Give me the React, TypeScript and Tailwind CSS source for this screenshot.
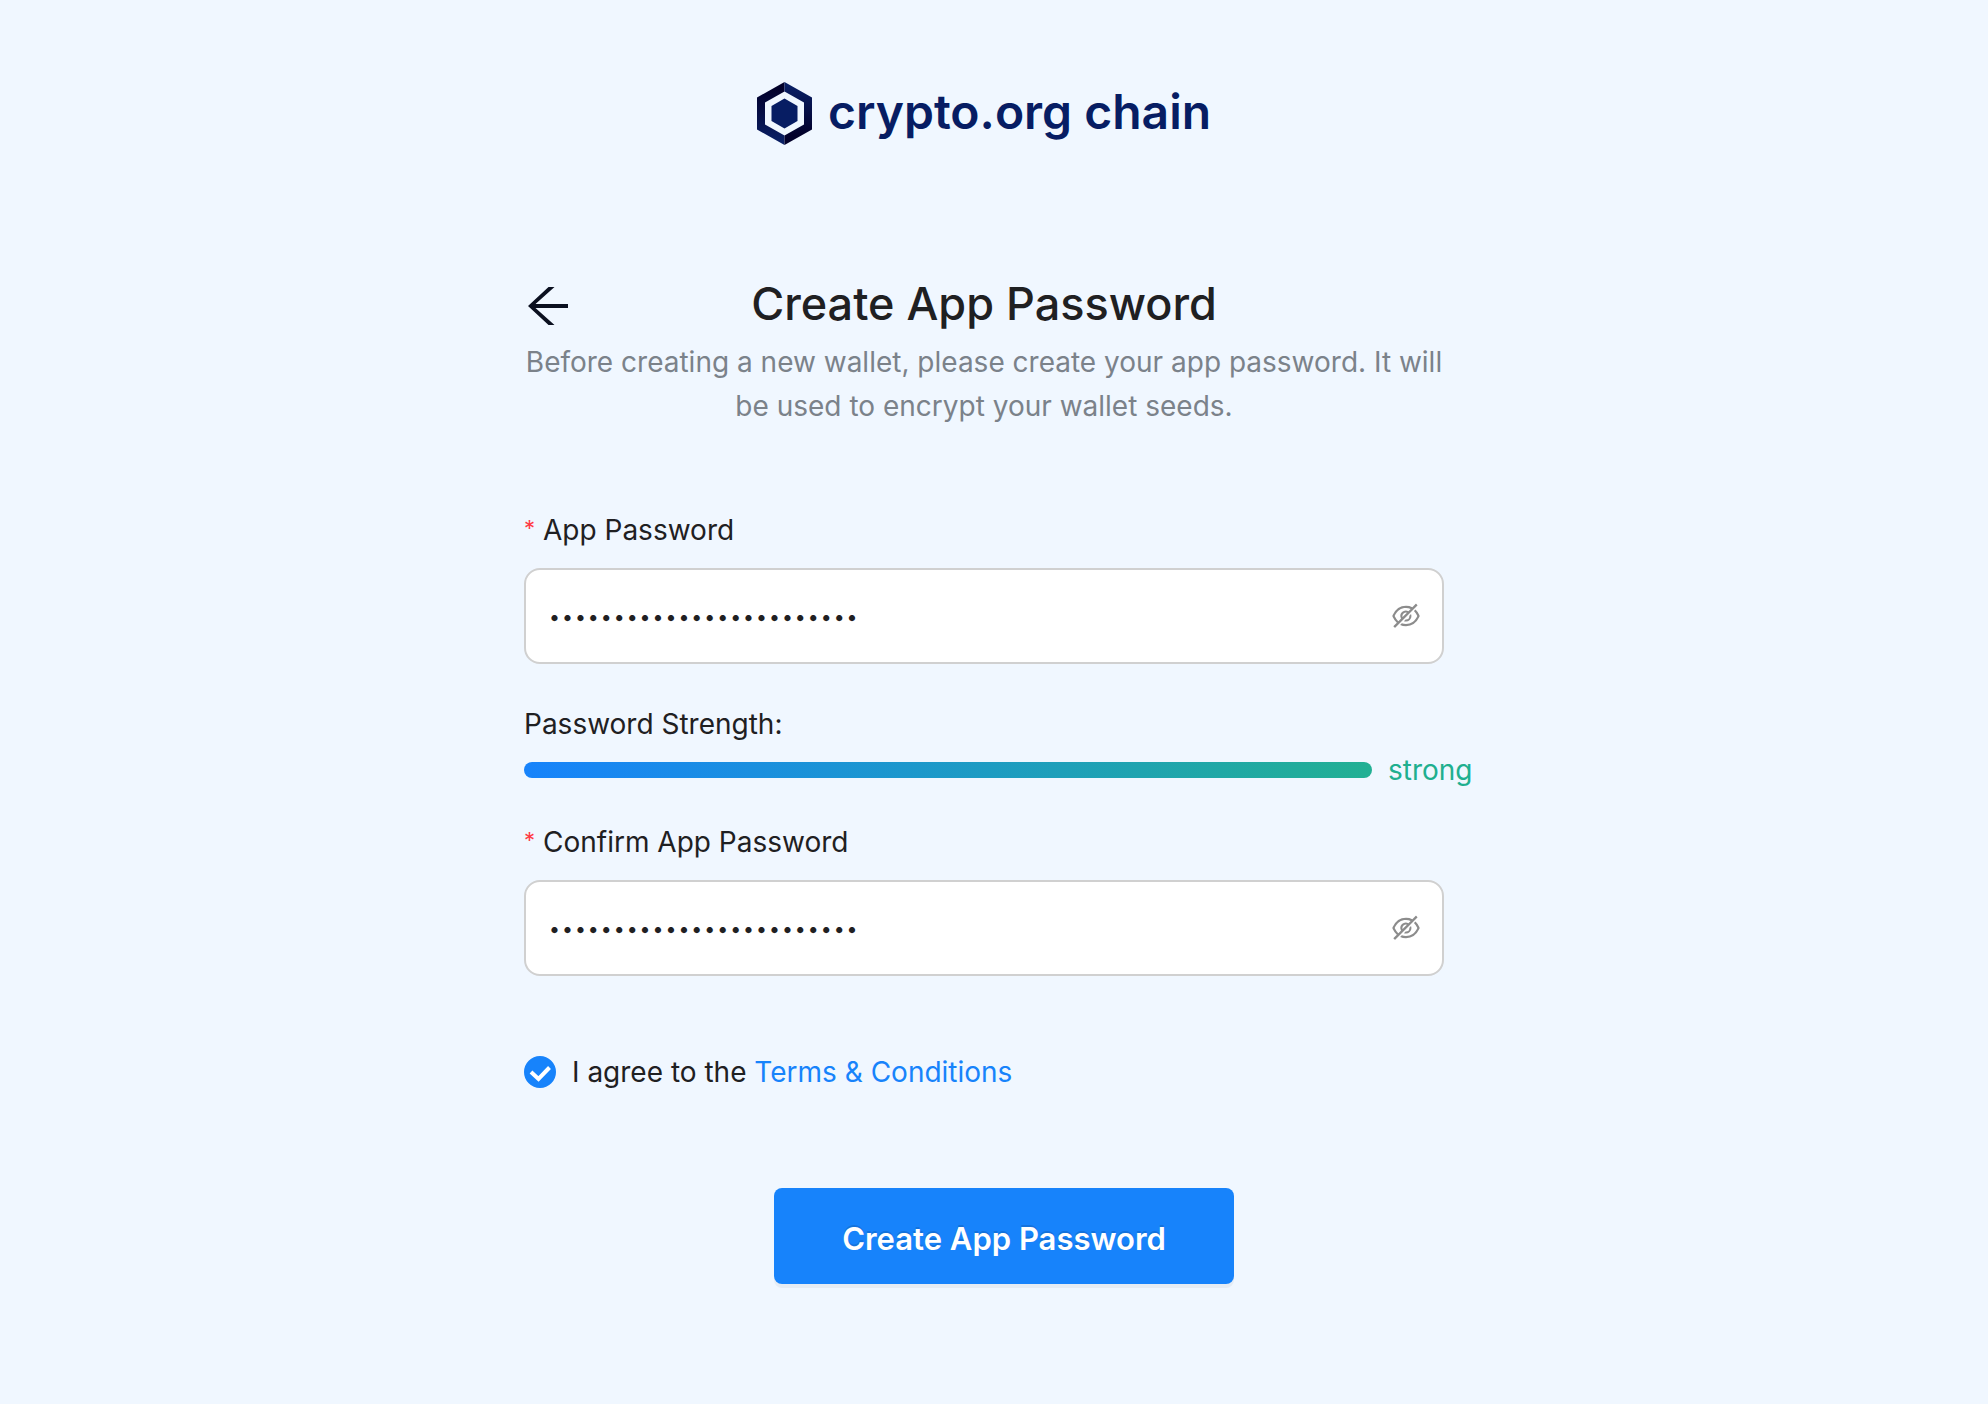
import { useState } from "react";
import { AiOutlineEye, AiOutlineEyeInvisible } from "react-icons/ai";

function Logo() {
  return (
    <div className="flex items-center justify-center gap-4 text-[#071d63]">
      <svg viewBox="0 0 55 63" className="h-[63px] w-[55px]" aria-hidden="true">
        <defs>
          <linearGradient id="hexLeft" x1="0" y1="0" x2="0" y2="1">
            <stop offset="0.1" stopColor="#02002a" />
            <stop offset="1" stopColor="#0a2168" />
          </linearGradient>
          <linearGradient id="hexRight" x1="0" y1="0" x2="0" y2="1">
            <stop offset="0" stopColor="#0a2168" />
            <stop offset="0.85" stopColor="#02002a" />
          </linearGradient>
        </defs>
        <path d="M27.5 0 0 15.5v32L27.5 63V53.5L8 42.5V20.5l19.5-11z" fill="url(#hexLeft)" />
        <path d="M27.5 0 55 15.5v32L27.5 63V53.5L47 42.5V20.5L27.5 9.5z" fill="url(#hexRight)" />
        <path d="m27.5 16.5 13 7.5v15l-13 7.5L14.5 39V24z" fill="#071d63" />
      </svg>
      <span className="pb-1 text-[48px] leading-14 font-semibold">crypto.org chain</span>
    </div>
  );
}

type PasswordFieldProps = {
  id: string;
  label: string;
  value: string;
  onChange: (value: string) => void;
};

function PasswordField({ id, label, value, onChange }: PasswordFieldProps) {
  const [visible, setVisible] = useState(false);
  const Icon = visible ? AiOutlineEye : AiOutlineEyeInvisible;
  return (
    <div className="flex flex-col gap-4">
      <label htmlFor={id} className="flex gap-2 leading-11">
        <span className="text-[22px] leading-10 text-[#ff3b45]">*</span>
        {label}
      </label>
      <div className="flex h-24 items-center rounded-2xl border-2 border-[#d0d0d0] bg-white px-5">
        <input
          id={id}
          type={visible ? "text" : "password"}
          value={value}
          onChange={(e) => onChange(e.target.value)}
          className="h-full min-w-0 flex-1 bg-transparent pt-[2px] pl-[2px] text-[23px] font-light outline-none"
        />
        <button
          type="button"
          aria-label={visible ? "Hide password" : "Show password"}
          onClick={() => setVisible(!visible)}
          className="text-[#8c8c8c]"
        >
          <Icon className="size-8" />
        </button>
      </div>
    </div>
  );
}

export default function App() {
  const [password, setPassword] = useState("correct-horse-battery-24");
  const [confirm, setConfirm] = useState("correct-horse-battery-24");
  const [agreed, setAgreed] = useState(true);

  return (
    <div className="flex min-h-screen flex-col items-center bg-[#f0f7ff] pt-[82px] pr-5 pb-[119px] font-['Inter',sans-serif] text-[28px] text-[#1f2022]">
      <Logo />
      <main className="mt-[131px] w-full max-w-[920px]">
        <div className="grid grid-cols-[1fr_auto_1fr] items-center">
          <button type="button" aria-label="Back" className="mt-1 ml-1 w-10">
            <svg viewBox="0 0 40 38" className="h-[38px] w-10" fill="#0b1020" aria-hidden="true">
              <path d="M20.5 0h6L7.5 17H40v4H7.5l19 17h-6L0 19z" />
            </svg>
          </button>
          <h1 className="text-[45px] leading-14 font-medium">Create App Password</h1>
        </div>
        <p className="mt-2 text-center leading-11 text-[#7b828a]">
          Before creating a new wallet, please create your app password. It will be used to encrypt your wallet seeds.
        </p>

        <form className="mt-20" onSubmit={(e) => e.preventDefault()}>
          <PasswordField id="password" label="App Password" value={password} onChange={setPassword} />

          <div className="mt-[38px] -mr-8 mb-7">
            <div className="leading-11">Password Strength:</div>
            <div className="mt-[2px] flex items-center gap-4 leading-11">
              <div className="h-4 w-[848px] rounded-full bg-linear-to-r/srgb from-[#1783fb] to-[#22b093]" />
              <span className="text-[#20af8f]">strong</span>
            </div>
          </div>

          <PasswordField id="confirm" label="Confirm App Password" value={confirm} onChange={setConfirm} />

          <div className="mt-[74px] flex items-center gap-4 leading-11">
            <span className="grid size-8">
              <input
                id="agree"
                type="checkbox"
                checked={agreed}
                onChange={(e) => setAgreed(e.target.checked)}
                className="col-start-1 row-start-1 size-8 appearance-none rounded-full border-2 border-[#1783fb] bg-white checked:bg-[#1783fb]"
              />
              <svg
                viewBox="0 0 32 32"
                className="pointer-events-none col-start-1 row-start-1 size-8"
                fill="none"
                stroke="#fff"
                strokeWidth="4"
                aria-hidden="true"
              >
                <path d="m7 16 7.5 7L25.5 11.5" />
              </svg>
            </span>
            <label htmlFor="agree">
              I agree to the{" "}
              <a href="#terms" className="text-[#1783fb]">
                Terms &amp; Conditions
              </a>
            </label>
          </div>

          <div className="mt-[94px] flex justify-center pl-10">
            <button
              type="submit"
              className="h-24 w-[460px] rounded-lg bg-[#1783fb] pt-[6px] text-[31px] font-semibold text-white shadow-[0_4px_0_rgba(0,0,0,0.045)] text-shadow-[0_-2px_0_rgba(0,0,0,0.12)]"
            >
              Create App Password
            </button>
          </div>
        </form>
      </main>
    </div>
  );
}
